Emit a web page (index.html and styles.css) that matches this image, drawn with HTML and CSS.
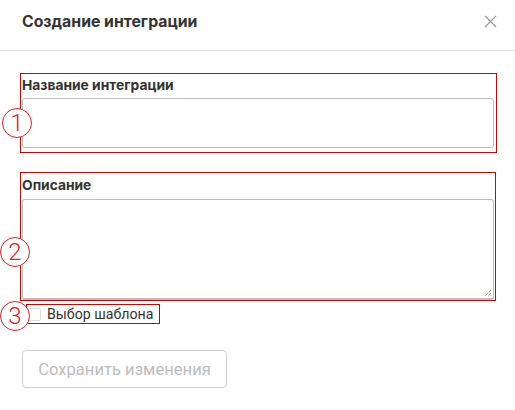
FILE: index.html
```html
<!DOCTYPE html>
<html lang="ru">
<head>
<meta charset="utf-8">
<link rel="stylesheet" href="styles.css">
</head>
<body>
<div class="modal">
  <header class="head">
    <h1 class="title">Создание интеграции</h1>
    <svg class="close" width="13" height="13" viewBox="0 0 13 13"><path d="M1 1 L12 12 M12 1 L1 12" stroke="#999" stroke-width="1.2" fill="none"/></svg>
  </header>
  <div class="body">
    <div class="mark box1">
      <label class="lbl">Название интеграции</label>
      <div class="input"></div>
      <span class="num n1">1</span>
    </div>
    <div class="mark box2">
      <label class="lbl">Описание</label>
      <div class="area">
        <svg class="grip" width="8" height="8" viewBox="0 0 8 8"><path d="M7 1 L1 7 M7 4 L4 7 M7 6.5 L6.5 7" stroke="#666" stroke-width="1" stroke-dasharray="1 1" fill="none"/></svg>
      </div>
      <span class="num n2">2</span>
    </div>
    <div class="mark box3">
      <span class="check"></span>
      <span class="chk-text">Выбор шаблона</span>
      <span class="num n3">3</span>
    </div>
    <button class="save">Сохранить изменения</button>
  </div>
</div>
</body>
</html>
```
FILE: styles.css
```css
* { box-sizing: border-box; }
html, body { margin: 0; padding: 0; background: #fff; }
body { font-family: Roboto, "Noto Sans", sans-serif; color: #333; width: 515px; height: 410px; overflow: hidden; }
.head {
  height: 51px;
  border-bottom: 1px solid #dcdcdc;
  display: flex;
  align-items: flex-start;
  justify-content: space-between;
  padding: 13px 18px 0 22px;
}
.title { margin: 0; font-family: Inter, Roboto, sans-serif; font-size: 15.8px; font-weight: 700; color: #333; line-height: 18px; }
.close { margin-top: 2px; }
.body { padding: 22px 0 0 20px; display: flex; flex-direction: column; align-items: flex-start; }
.mark { position: relative; border: 1px solid #d50000; }
.box1 { width: 477px; height: 80px; padding: 3px 2px 0 1px; }
.box2 { width: 476px; height: 129px; padding: 4px 1px 0 1px; margin-top: 19px; }
.lbl { display: block; font-family: Inter, Roboto, sans-serif; font-size: 13.8px; font-weight: 700; color: #333; line-height: 17px; margin-bottom: 4px; }
.box2 .lbl { margin-bottom: 5px; }
.input { width: 472px; height: 50px; border: 1px solid #bdbdbd; border-radius: 3px; }
.area { position: relative; width: 472px; height: 101px; border: 1px solid #bdbdbd; border-bottom-width: 2px; border-radius: 3px; }
.grip { position: absolute; right: 1px; bottom: 1px; }
.box3 { margin: 3px 0 0 6px; width: 134px; height: 20px; display: flex; align-items: center; padding-left: 1px; }
.check { width: 13px; height: 13px; border: 1px solid #ddd; border-radius: 2px; background: #fff; margin-right: 6px; }
.chk-text { font-size: 14.2px; color: #333; line-height: 16px; }
.num {
  position: absolute;
  width: 30px; height: 30px;
  border: 1.3px solid #e02020;
  border-radius: 50%;
  background: #fff;
  color: #e02020;
  font-size: 24px;
  font-weight: 300;
  display: flex; align-items: center; justify-content: center;
  line-height: 1;
}
.n1 { left: -19px; top: 34px; }
.n2 { left: -21px; top: 64px; }
.n3 { left: -27px; top: -4px; }
.save {
  margin-top: 26px;
  margin-left: 2px;
  width: 205px; height: 38px;
  background: #fff;
  border: 1px solid #d0d0d0;
  border-radius: 4px;
  font-family: Roboto, "Noto Sans", sans-serif;
  font-size: 16.6px;
  color: #bdbdbd;
  padding: 0;
}
```
